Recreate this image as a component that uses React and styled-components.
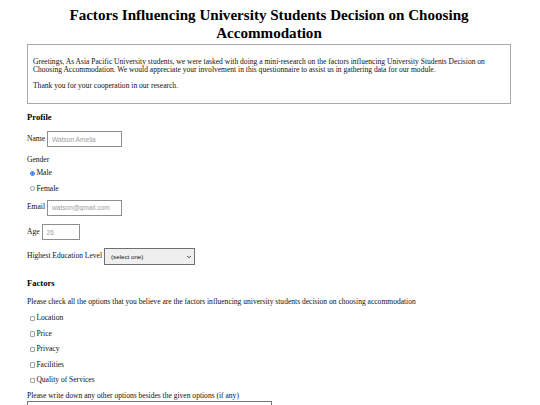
import React from 'react';
import styled, { createGlobalStyle } from 'styled-components';
import { ChevronDown } from 'lucide-react';

const GlobalStyle = createGlobalStyle`
  html, body {
    margin: 0;
    padding: 0;
    background: #ffffff;
  }
  body {
    font-family: "Liberation Serif", "Times New Roman", serif;
    font-size: 7.55px;
    color: #111;
  }
`;

const factors = ['Location', 'Price', 'Privacy', 'Facilities', 'Quality of Services'];

export default function App() {
  return (
    <>
      <GlobalStyle />
      <Page>
        <Title>Factors Influencing University Students Decision on Choosing Accommodation</Title>

        <IntroBox>
          <Para>
            Greetings, As Asia Pacific University students, we were tasked with doing a mini-research on the factors
            influencing University Students Decision on Choosing Accommodation. We would appreciate your involvement in
            this questionnaire to assist us in gathering data for our module.
          </Para>
          <Para>Thank you for your cooperation in our research.</Para>
        </IntroBox>

        <SectionTitle $mt={9.5}>Profile</SectionTitle>

        <Field $mt={8}>
          <Label>Name</Label>
          <TextInput type="text" placeholder="Watson Amelia" $w={75} />
        </Field>

        <Line $mt={9}>Gender</Line>
        <Choice $mt={4.7}>
          <Radio type="radio" name="gender" defaultChecked />
          <span>Male</span>
        </Choice>
        <Choice $mt={7.2}>
          <Radio type="radio" name="gender" />
          <span>Female</span>
        </Choice>

        <Field $mt={6.7}>
          <Label>Email</Label>
          <TextInput type="email" placeholder="watson@gmail.com" $w={75} />
        </Field>

        <Field $mt={8.5}>
          <Label>Age</Label>
          <TextInput type="text" placeholder="26" $w={38} />
        </Field>

        <Field $mt={8}>
          <Label>Highest Education Level</Label>
          <SelectWrap>
            <Select defaultValue="">
              <option value="">(select one)</option>
              <option>Diploma</option>
              <option>Degree</option>
              <option>Master</option>
            </Select>
            <Chevron>
              <ChevronDown size={6} strokeWidth={3.5} />
            </Chevron>
          </SelectWrap>
        </Field>

        <SectionTitle $mt={13.5}>Factors</SectionTitle>

        <Line $mt={10}>
          Please check all the options that you believe are the factors influencing university students decision on
          choosing accommodation
        </Line>

        {factors.map((f, i) => (
          <Choice key={f} $mt={i === 0 ? 7.7 : 7.2}>
            <Check type="checkbox" />
            <span>{f}</span>
          </Choice>
        ))}

        <Line $mt={7.2}>Please write down any other options besides the given options (if any)</Line>
        <TextArea />
      </Page>
    </>
  );
}

const Page = styled.div`
  display: flex;
  flex-direction: column;
  align-items: flex-start;
  padding: 6px 29px 0 27px;
  font-family: "Liberation Serif", "Times New Roman", serif;
`;

const Title = styled.h1`
  align-self: stretch;
  margin: 0;
  font-family: "Liberation Serif", "Times New Roman", serif;
  font-size: 15.1px;
  line-height: 18px;
  font-weight: bold;
  text-align: center;
  color: #000;
`;

const IntroBox = styled.div`
  align-self: stretch;
  margin-top: 2px;
  padding: 6px 5px;
  border: 1px solid #a9a9a9;
`;

const Para = styled.p`
  margin: 7px 0;
  line-height: 8.3px;
`;

const SectionTitle = styled.h3`
  margin: ${p => p.$mt}px 0 0;
  font-size: 8.6px;
  line-height: 9.7px;
  font-weight: bold;
  color: #000;
`;

const Line = styled.div`
  margin-top: ${p => p.$mt}px;
  line-height: 8.3px;
`;

const Field = styled.div`
  display: flex;
  align-items: center;
  gap: 2px;
  margin-top: ${p => p.$mt}px;
`;

const Label = styled.span`
  line-height: 8.3px;
`;

const TextInput = styled.input`
  box-sizing: border-box;
  width: ${p => p.$w}px;
  height: 16px;
  margin: 0;
  padding: 0 4px;
  border: 1px solid #8f8f8f;
  border-radius: 0;
  background: #fff;
  font-family: "Liberation Sans", Arial, sans-serif;
  font-size: 6.6px;
  color: #222;
  outline: none;

  &::placeholder {
    color: #9d9d9d;
  }
`;

const SelectWrap = styled.div`
  position: relative;
  display: inline-flex;
`;

const Select = styled.select`
  box-sizing: border-box;
  appearance: none;
  width: 91px;
  height: 17px;
  margin: 0;
  padding: 0 0 0 6px;
  border: 1px solid #6f6f6f;
  border-radius: 0;
  background: #efefef;
  font-family: "Liberation Sans", Arial, sans-serif;
  font-size: 6.2px;
  color: #111;
`;

const Chevron = styled.span`
  position: absolute;
  right: 3px;
  top: 50%;
  transform: translateY(-50%);
  display: flex;
  color: #222;
  pointer-events: none;
`;

const Choice = styled.label`
  display: flex;
  align-items: center;
  margin-top: ${p => p.$mt}px;
  line-height: 8.3px;
`;

const Radio = styled.input`
  appearance: none;
  box-sizing: border-box;
  width: 5.4px;
  height: 5.4px;
  margin: 0 1.4px 0 2.6px;
  border: 0.8px solid #9a9a9a;
  border-radius: 50%;
  background: #fff;

  &:checked {
    border-color: #1a73e8;
    background: radial-gradient(circle, #1a73e8 0 45%, #fff 55% 100%);
  }
`;

const Check = styled.input`
  appearance: none;
  box-sizing: border-box;
  width: 5.4px;
  height: 5.4px;
  margin: 0 1.4px 0 2.6px;
  border: 0.8px solid #a0a0a0;
  border-radius: 1px;
  background: #fff;
`;

const TextArea = styled.textarea`
  box-sizing: border-box;
  width: 245px;
  height: 50px;
  margin: 1px 0 0;
  border: 1px solid #767676;
  border-radius: 0;
  resize: none;
`;
